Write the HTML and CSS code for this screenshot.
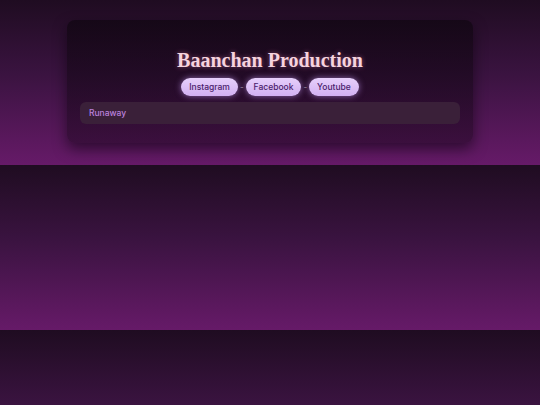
FILE: index.html
```html
<!DOCTYPE html>
<html>
<head>
<meta charset="utf-8">
<link rel="stylesheet" href="styles.css">
</head>
<body>
<main class="card">
  <h1 class="title">Baanchan Production</h1>
  <nav class="links">
    <a class="pill">Instagram</a>
    <span class="sep">-</span>
    <a class="pill">Facebook</a>
    <span class="sep">-</span>
    <a class="pill">Youtube</a>
  </nav>
  <div class="track">Runaway</div>
</main>
</body>
</html>
```
FILE: styles.css
```css
html {
  margin: 0;
}
body {
  margin: 0;
  padding: 20px 0 22px;
  background: linear-gradient(180deg, #1f0c21 0%, #3a1340 45%, #661a68 100%);
  font-family: "Inter", "Liberation Sans", sans-serif;
}
.card {
  width: 406px;
  margin: 0 auto;
  box-sizing: border-box;
  padding: 28px 13px 19px;
  border-radius: 8px;
  background: linear-gradient(180deg, rgba(10, 4, 11, 0.6), rgba(20, 4, 22, 0.45));
  box-shadow: 0 6px 14px rgba(10, 0, 12, 0.55);
  display: flex;
  flex-direction: column;
  align-items: center;
}
.title {
  margin: 0;
  font-family: "Liberation Serif", "DejaVu Serif", serif;
  font-weight: 700;
  font-size: 20px;
  line-height: 24px;
  letter-spacing: 0;
  color: #f6d3de;
  text-shadow: 0 0 5px rgba(255, 150, 200, 0.45);
}
.links {
  margin-top: 6px;
  display: flex;
  align-items: center;
  gap: 2px;
}
.pill {
  display: block;
  height: 18px;
  line-height: 18px;
  padding: 0 8px;
  border-radius: 9px;
  background: linear-gradient(180deg, #e6cffb, #d2b0f2);
  color: #4a1d6c;
  font-size: 8.5px;
  font-weight: 500;
  box-shadow: 0 0 6px rgba(205, 160, 255, 0.6);
}
.sep {
  color: #9a8aa0;
  font-size: 8px;
}
.track {
  align-self: stretch;
  margin-top: 6px;
  height: 22px;
  line-height: 22px;
  padding: 0 9px;
  border-radius: 6px;
  background: #3a2039;
  color: #bb80dc;
  font-size: 8.5px;
  font-weight: 500;
}
```
